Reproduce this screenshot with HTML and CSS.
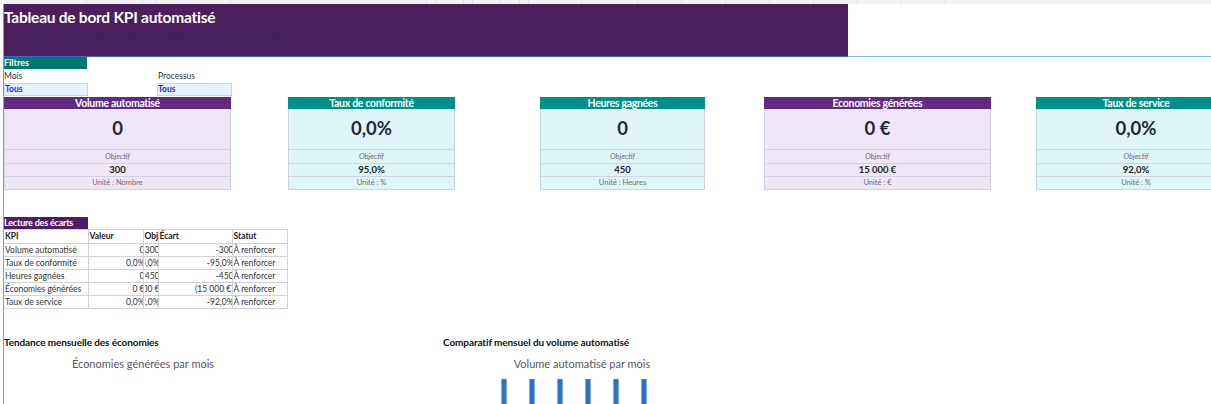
FILE: index.html
```html
<!DOCTYPE html>
<html lang="fr">
<head>
<meta charset="utf-8">
<title>Tableau de bord KPI automatisé</title>
<link rel="stylesheet" href="styles.css">
</head>
<body>
<div class="strip">
  <span style="width:87px"></span><span style="width:56px"></span><span style="width:14px"></span><span style="width:74px"></span><span style="width:196px"></span><span style="width:9px"></span><span style="width:28px"></span><span style="width:9px"></span><span style="width:28px"></span><span style="width:19px"></span><span style="width:9px"></span><span style="width:53px"></span><span style="width:56px"></span><span style="width:44px"></span><span style="width:44px"></span><span style="width:44px"></span><span style="width:44px"></span><span style="width:44px"></span><span style="width:44px"></span><span style="width:44px"></span>
</div>
<div class="sheet">
  <header class="banner">
    <h1>Tableau de bord KPI automatisé</h1>
    <p>Version française • modifiable • réutilisable • variables pilotées par la feuille Variables</p>
  </header>
  <div class="selline"></div>

  <div class="filters">
    <div class="tag teal-tag">Filtres</div>
    <div class="frow flabels"><span>Mois</span><span class="second">Processus</span></div>
    <div class="frow finputs"><span class="box b1">Tous</span><span class="box b2">Tous</span></div>
  </div>

  <div class="cards">
    <div class="card purple c1">
      <div class="ch">Volume automatisé</div>
      <div class="cv">0</div>
      <div class="co">Objectif</div>
      <div class="ct">300</div>
      <div class="cu">Unité : Nombre</div>
    </div>
    <div class="card teal c2">
      <div class="ch">Taux de conformité</div>
      <div class="cv">0,0%</div>
      <div class="co">Objectif</div>
      <div class="ct">95,0%</div>
      <div class="cu">Unité : %</div>
    </div>
    <div class="card teal c3">
      <div class="ch">Heures gagnées</div>
      <div class="cv">0</div>
      <div class="co">Objectif</div>
      <div class="ct">450</div>
      <div class="cu">Unité : Heures</div>
    </div>
    <div class="card purple c4">
      <div class="ch">Economies générées</div>
      <div class="cv">0 €</div>
      <div class="co">Objectif</div>
      <div class="ct">15 000 €</div>
      <div class="cu">Unité : €</div>
    </div>
    <div class="card teal c5">
      <div class="ch">Taux de service</div>
      <div class="cv">0,0%</div>
      <div class="co">Objectif</div>
      <div class="ct">92,0%</div>
      <div class="cu">Unité : %</div>
    </div>
  </div>

  <section class="ecarts">
    <div class="tag dark-tag">Lecture des écarts</div>
    <table class="gap-table">
      <colgroup><col class="k1"><col class="k2"><col class="k3"><col class="k4"><col class="k5"></colgroup>
      <thead>
        <tr><th>KPI</th><th>Valeur</th><th>Obj</th><th>Écart</th><th>Statut</th></tr>
      </thead>
      <tbody>
        <tr><td>Volume automatisé</td><td><div class="num">0</div></td><td><div class="num">300</div></td><td><div class="num">-300</div></td><td>À renforcer</td></tr>
        <tr><td>Taux de conformité</td><td><div class="num">0,0%</div></td><td><div class="num">95,0%</div></td><td><div class="num">-95,0%</div></td><td>À renforcer</td></tr>
        <tr><td>Heures gagnées</td><td><div class="num">0</div></td><td><div class="num">450</div></td><td><div class="num">-450</div></td><td>À renforcer</td></tr>
        <tr><td>Économies générées</td><td><div class="num">0 €</div></td><td><div class="num">15 000 €</div></td><td><div class="num">(15 000 €)</div></td><td>À renforcer</td></tr>
        <tr><td>Taux de service</td><td><div class="num">0,0%</div></td><td><div class="num">92,0%</div></td><td><div class="num">-92,0%</div></td><td>À renforcer</td></tr>
      </tbody>
    </table>
  </section>

  <section class="charts">
    <div class="chart-col">
      <div class="chart-label">Tendance mensuelle des économies</div>
      <div class="chart">
        <div class="chart-title">Économies générées par mois</div>
      </div>
    </div>
    <div class="chart-col">
      <div class="chart-label">Comparatif mensuel du volume automatisé</div>
      <div class="chart">
        <div class="chart-title">Volume automatisé par mois</div>
        <div class="bars"><span></span><span></span><span></span><span></span><span></span><span></span></div>
      </div>
    </div>
  </section>
</div>
</body>
</html>
```

FILE: styles.css
```css
* { box-sizing: border-box; margin: 0; padding: 0; }

html, body {
  width: 1211px;
  height: 404px;
  overflow: hidden;
  background: #ffffff;
}

body {
  font-family: Lato, "Liberation Sans", sans-serif;
  color: #222;
}

.strip {
  height: 4px;
  background: #f2f2f5;
  display: flex;
}
.strip span {
  flex: none;
  height: 4px;
  border-right: 1px solid #e0e0e6;
}

.sheet {
  margin-left: 3px;
  border-left: 1px solid #6aa6e6;
  min-height: 400px;
}

/* banner */
.banner {
  width: 844px;
  height: 52px;
  background: #4a1f5e;
  padding: 4px 0 0 0;
}
.banner h1 {
  font-size: 15.5px;
  font-weight: 700;
  line-height: 18px;
  color: #ffffff;
  letter-spacing: -0.25px;
}
.banner p {
  margin-top: 6px;
  font-size: 8px;
  font-style: italic;
  line-height: 10px;
  color: #3a2a4c;
}

.selline {
  height: 1px;
  background: linear-gradient(to right, #3b69c4 844px, #7cbaf6 844px);
}

/* filters */
.tag {
  width: 84px;
  height: 12px;
  color: #fff;
  font-size: 8.5px;
  font-weight: 700;
  line-height: 12px;
}
.teal-tag { width: 83px; background: #00786f; font-size: 9px; }
.dark-tag { background: #4b1f62; font-size: 9px; letter-spacing: -0.2px; }

.frow {
  display: grid;
  grid-template-columns: 153px 74px;
}
.flabels {
  height: 14px;
  font-size: 8.5px;
  line-height: 14px;
  color: #333;
}
.flabels .second { padding-left: 1px; }
.finputs { height: 13px; }
.box {
  height: 13px;
  background: #e6f1fc;
  border: 1px solid #c9d5e2;
  color: #1f2ee0;
  font-size: 8.5px;
  font-weight: 700;
  line-height: 11px;
}
.b1 { width: 84px; }
.b2 { width: 75px; }

/* cards */
.cards {
  margin-top: 1px;
  display: grid;
  grid-template-columns: 227px 57px 167px 85px 165px 59px 227px 45px 200px;
  height: 93px;
}
.c1 { grid-column: 1; }
.c2 { grid-column: 3; }
.c3 { grid-column: 5; }
.c4 { grid-column: 7; }
.c5 { grid-column: 9; }

.card {
  display: flex;
  flex-direction: column;
  text-align: center;
  border: 1px solid #cdd2df;
  border-top: none;
}
.card.purple { background: #efe7f6; }
.card.teal { background: #dff5f7; }

.ch {
  height: 12px;
  margin: 0 -1px;
  color: #fff;
  font-size: 10.5px;
  font-weight: 700;
  line-height: 12px;
  letter-spacing: -0.3px;
}
.purple .ch { background: #632a82; }
.teal .ch { background: #00908a; }

.cv {
  height: 40px;
  font-size: 18.5px;
  font-weight: 700;
  line-height: 38px;
  color: #1f2733;
}
.co, .ct, .cu {
  border-top: 1px solid #cfd4e2;
}
.co {
  height: 14px;
  font-size: 7.5px;
  font-style: italic;
  color: #6c6c74;
  line-height: 13px;
}
.ct {
  height: 13px;
  font-size: 9.5px;
  font-weight: 700;
  color: #222;
  line-height: 12px;
}
.cu {
  height: 13px;
  font-size: 7.5px;
  color: #6c6c74;
  line-height: 12px;
}

/* écarts */
.ecarts {
  margin-top: 27px;
}
.gap-table {
  border-collapse: collapse;
  table-layout: fixed;
  width: 283px;
  font-size: 8.5px;
  color: #333;
}
.k1 { width: 84px; }
.k2 { width: 55px; }
.k3 { width: 15px; }
.k4 { width: 74px; }
.k5 { width: 55px; }

.gap-table th,
.gap-table td {
  height: 13px;
  border: 1px solid #cfd2da;
  border-left: none;
  padding: 0 0 0 1px;
  white-space: nowrap;
  overflow: hidden;
  line-height: 11px;
  text-align: left;
}
.gap-table th {
  height: 14px;
  font-weight: 700;
  color: #222;
}

.num {
  display: flex;
  justify-content: flex-end;
  overflow: hidden;
  white-space: nowrap;
  margin-right: -2px;
}

/* charts */
.charts {
  margin-top: 28px;
  display: grid;
  grid-template-columns: 439px 1fr;
}
.chart-label {
  font-size: 10px;
  font-weight: 700;
  line-height: 10px;
  color: #111;
  letter-spacing: -0.1px;
}
.chart {
  width: 278px;
  padding-top: 10px;
}
.chart-title {
  text-align: center;
  font-size: 11px;
  line-height: 14px;
  color: #595959;
}
.bars {
  display: flex;
  gap: 22px;
  padding-left: 58px;
  margin-top: 8px;
}
.bars span {
  width: 6px;
  height: 30px;
  background: #2f73c6;
  border-left: 1px solid #7eaae0;
  border-right: 1px solid #7eaae0;
}
```
